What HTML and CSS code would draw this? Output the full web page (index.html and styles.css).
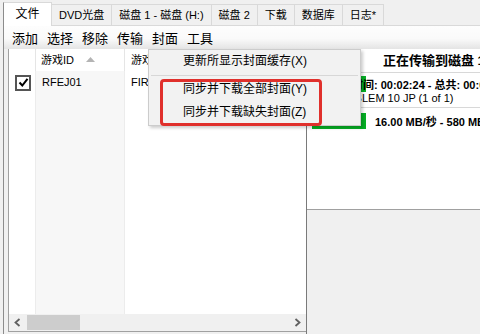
FILE: index.html
```html
<!DOCTYPE html>
<html>
<head>
  <meta charset="UTF-8">
  <title>游戏管理</title>
  <link rel="stylesheet" href="styles.css">
</head>
<body>
  <div class="tabs">
    <div class="tab active">文件</div>
    <div class="tab">DVD光盘</div>
    <div class="tab">磁盘 1 - 磁盘 (H:)</div>
    <div class="tab">磁盘 2</div>
    <div class="tab">下载</div>
    <div class="tab">数据库</div>
    <div class="tab">日志*</div>
  </div>

  <div class="page">
    <div class="menubar">
      <span class="menu-item">添加</span>
      <span class="menu-item">选择</span>
      <span class="menu-item">移除</span>
      <span class="menu-item">传输</span>
      <span class="menu-item">封面</span>
      <span class="menu-item">工具</span>
    </div>

    <div class="split">
      <div class="list">
        <div class="list-head">
          <div class="col col-check"></div>
          <div class="col col-id">游戏ID
            <svg class="sort" width="9" height="5" viewBox="0 0 9 5"><polygon points="0,5 4.5,0 9,5" fill="#b4b4b4"/></svg>
          </div>
          <div class="col col-name">游戏名称</div>
        </div>
        <div class="list-body">
          <div class="row">
            <div class="cell col-check">
              <span class="checkbox">
                <svg width="11" height="11" viewBox="0 0 11 11"><polyline points="1.5,5.5 4.3,8.5 9.5,1.8" fill="none" stroke="#000" stroke-width="2"/></svg>
              </span>
            </div>
            <div class="cell col-id">RFEJ01</div>
            <div class="cell col-name">FIRE EMBLEM 10 JP</div>
          </div>
        </div>
        <div class="hscroll">
          <span class="sb-btn">
            <svg width="7" height="9" viewBox="0 0 7 9"><polyline points="5.5,1 1.5,4.5 5.5,8" fill="none" stroke="#606060" stroke-width="1.8"/></svg>
          </span>
          <span class="sb-thumb"></span>
          <span class="sb-track"></span>
          <span class="sb-btn">
            <svg width="7" height="9" viewBox="0 0 7 9"><polyline points="1.5,1 5.5,4.5 1.5,8" fill="none" stroke="#606060" stroke-width="1.8"/></svg>
          </span>
        </div>
      </div>

      <div class="status">
        <div class="status-box">
          <div class="st-title">正在传输到磁盘 1 - 磁盘 (H:)</div>
          <div class="bar">
            <div class="fill" style="width:32%"></div>
            <div class="bar-text time">剩余时间: 00:02:24 - 总共: 00:05:12</div>
          </div>
          <div class="st-line">FIRE EMBLEM 10 JP (1 of 1)</div>
          <div class="bar tall">
            <div class="fill" style="width:32%"></div>
            <div class="bar-text speed">16.00 MB/秒 - 580 MB / 1.21 GB</div>
          </div>
        </div>
      </div>
    </div>

    <div class="dropdown">
      <div class="dd-item">更新所显示封面缓存(X)</div>
      <div class="dd-sep"></div>
      <div class="dd-item">同步并下载全部封面(Y)</div>
      <div class="dd-item">同步并下载缺失封面(Z)</div>
    </div>
    <div class="highlight"></div>
  </div>
</body>
</html>
```

FILE: styles.css
```css
body {
  margin: 0;
  width: 480px;
  height: 334px;
  overflow: hidden;
  background: #f0f0f0;
  font-family: "Liberation Sans", "Noto Sans CJK SC", sans-serif;
  font-size: 11px;
  color: #000;
}

/* tab strip */
.tabs {
  display: flex;
  align-items: flex-end;
  height: 25px;
  padding-left: 3px;
}
.tab {
  box-sizing: border-box;
  height: 21px;
  line-height: 20px;
  padding: 0 7px;
  background: #f0f0f0;
  border: 1px solid #d9d9d9;
  border-left: none;
  border-bottom: none;
  white-space: nowrap;
}
.tab.active {
  position: relative;
  z-index: 1;
  width: 49px;
  height: 24px;
  line-height: 22px;
  margin-bottom: -1px;
  padding: 0;
  text-align: center;
  font-size: 12px;
  background: #fff;
  border-left: 1px solid #8c8c8c;
}

/* tab page */
.page {
  position: relative;
  box-sizing: border-box;
  height: 309px;
  margin-left: 3px;
  border-left: 1px solid #8c8c8c;
  border-top: 1px solid #d9d9d9;
}
.menubar {
  display: flex;
  align-items: center;
  height: 23px;
  padding-left: 3.5px;
  font-size: 13px;
  background: linear-gradient(#fdfdfd, #fafafa 55%, #e4e4e4);
}
.menu-item {
  padding: 0 4.5px;
}

.split {
  display: flex;
  height: 285px;
  padding-left: 4px;
}

/* game list */
.list {
  box-sizing: border-box;
  flex: 0 0 298px;
  display: flex;
  flex-direction: column;
  margin-bottom: 2px;
  background: #fff;
  border-left: 1px solid #a0a0a0;
  border-bottom: 1px solid #a0a0a0;
}
.list-head {
  display: flex;
  height: 22px;
  line-height: 22px;
}
.col, .cell {
  box-sizing: border-box;
  white-space: nowrap;
  overflow: hidden;
}
.col-check {
  flex: 0 0 27px;
}
.col-id {
  flex: 0 0 89px;
  padding-left: 5px;
}
.col-name {
  flex: 1;
  padding-left: 6px;
}
.list-head .col-check,
.list-head .col-id {
  border-right: 1px solid #e5e5e5;
}
.sort {
  margin-left: 9px;
  vertical-align: 2px;
}
.list-body {
  flex: 1;
  background: linear-gradient(to right, #fff 0 26px, #ececec 26px 27px, #f7f7f7 27px 115px, #ececec 115px 116px, #fff 116px);
}
.row {
  display: flex;
  align-items: center;
  height: 21px;
}
.row .col-id {
  padding-left: 6px;
}
.checkbox {
  box-sizing: border-box;
  display: flex;
  align-items: center;
  justify-content: center;
  width: 16px;
  height: 16px;
  margin-left: 6px;
  margin-top: 2px;
  background: #fff;
  border: 2px solid #555;
}

.hscroll {
  display: flex;
  align-items: center;
  height: 17px;
  background: #f0f0f0;
}
.sb-btn {
  display: flex;
  align-items: center;
  justify-content: center;
  width: 17px;
  height: 17px;
}
.sb-thumb {
  width: 53px;
  height: 15px;
  margin-left: 1px;
  background: #cdcdcd;
}
.sb-track {
  flex: 1;
}

/* transfer status */
.status {
  flex: 1;
  min-width: 0;
  border-left: 1px solid #7a7a7a;
}
.status-box {
  box-sizing: border-box;
  height: 161px;
  overflow: hidden;
  background: #fff;
  border-bottom: 1px solid #a0a0a0;
}
.st-title {
  height: 23px;
  line-height: 24px;
  padding-left: 76px;
  font-size: 13px;
  font-weight: bold;
  white-space: nowrap;
  border-bottom: 1px solid #d8d8d8;
}
.bar {
  display: grid;
  grid-template-columns: minmax(0, 1fr);
  height: 12px;
  margin: 3px 0 0 5px;
}
.bar.tall {
  height: 13px;
  margin-top: 5px;
}
.bar > * {
  grid-area: 1 / 1;
}
.fill {
  height: 100%;
  background: #06b025;
}
.bar-text {
  align-self: center;
  font-weight: bold;
  white-space: nowrap;
}
.bar-text.time {
  padding-left: 18px;
}
.bar-text.speed {
  padding-left: 63px;
}
.st-line {
  height: 17px;
  line-height: 17px;
  margin-top: 2px;
  padding-left: 3px;
  white-space: nowrap;
  border-bottom: 1px solid #d8d8d8;
}

/* cover menu */
.dropdown {
  position: absolute;
  z-index: 2;
  left: 144px;
  top: 23px;
  box-sizing: border-box;
  width: 213px;
  height: 77px;
  padding-bottom: 1px;
  font-size: 12px;
  background: #f2f2f2;
  border: 1px solid #cccccc;
  box-shadow: 2px 2px 3px rgba(0, 0, 0, 0.2);
}
.dd-item {
  height: 23px;
  line-height: 23px;
  padding-left: 34px;
  white-space: nowrap;
}
.dd-sep {
  height: 1px;
  margin: 2px 2px;
  background: #d7d7d7;
}
.highlight {
  position: absolute;
  z-index: 3;
  left: 156px;
  top: 53px;
  box-sizing: border-box;
  width: 162px;
  height: 47px;
  border: 3px solid #e0302c;
  border-radius: 4px;
}
```
